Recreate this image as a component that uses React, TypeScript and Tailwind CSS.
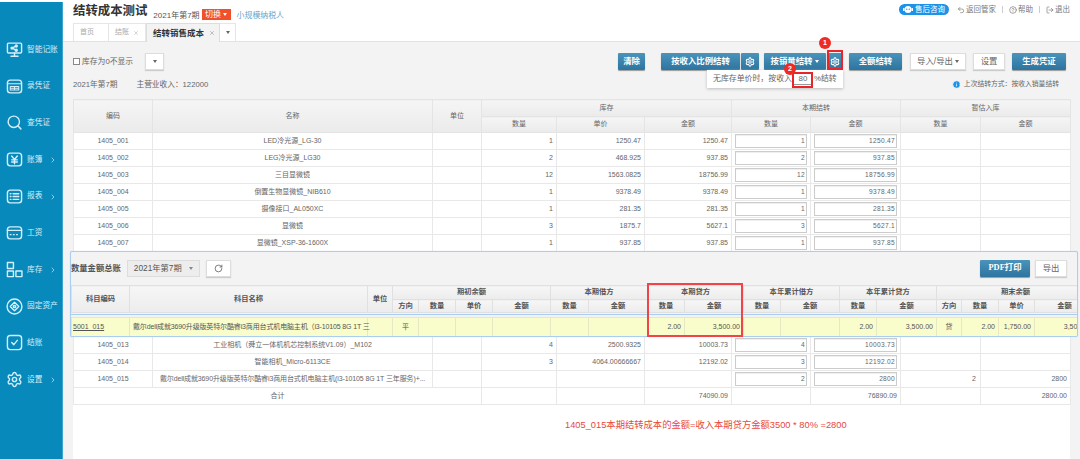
import { ChevronRight, RotateCw, Undo2, CircleHelp, LogOut, Search, Settings, Info, X } from "lucide-react";
import type { ReactNode } from "react";

const font = "font-['Liberation_Sans','Noto_Sans_CJK_SC',sans-serif]";

const iconProps = {
  width: 17,
  height: 17,
  viewBox: "0 0 24 24",
  fill: "none",
  stroke: "currentColor",
  strokeWidth: 2,
  strokeLinecap: "round" as const,
  strokeLinejoin: "round" as const,
};

const MonitorIcon = () => (
  <svg {...iconProps}>
    <rect x="2" y="3" width="20" height="14" rx="1.5" />
    <path d="M12 17v4M7 21.5h10M9 10l5-3M9 10l5 3" />
    <circle cx="8.5" cy="10" r="1.4" fill="currentColor" />
    <circle cx="14.5" cy="7" r="1.4" fill="currentColor" />
    <circle cx="14.5" cy="13" r="1.4" fill="currentColor" />
  </svg>
);
const VoucherIcon = () => (
  <svg {...iconProps}>
    <rect x="2" y="3" width="20" height="18" rx="4" />
    <path d="M2 8h20M6 12h12v5H6zM12 12v5M6 14.5h12" strokeWidth={1.5} />
  </svg>
);
const YenIcon = () => (
  <svg {...iconProps}>
    <rect x="2" y="3" width="20" height="18" rx="4" />
    <path d="M8 7l4 5 4-5M12 12v6M8 12.5h8M8 15.5h8" />
  </svg>
);
const ReportIcon = () => (
  <svg {...iconProps}>
    <rect x="2" y="3" width="20" height="18" rx="4" />
    <path d="M6 8h1M10 8h8M6 12h1M10 12h8M6 16h1M10 16h8" />
  </svg>
);
const SalaryIcon = () => (
  <svg {...iconProps}>
    <rect x="2" y="4" width="20" height="17" rx="4" />
    <path d="M2 9h20M6 15h1M10.5 15h1M15 15h1" />
  </svg>
);
const StockIcon = () => (
  <svg {...iconProps}>
    <rect x="2" y="2" width="8.5" height="8.5" />
    <rect x="2" y="14" width="8.5" height="8" />
    <rect x="14" y="14" width="8.5" height="8" />
  </svg>
);
const AssetIcon = () => (
  <svg {...iconProps}>
    <circle cx="12" cy="12" r="10.5" />
    <path d="M12 6l6 6-6 6-6-6z" />
    <circle cx="12" cy="12" r="1.6" />
  </svg>
);
const CloseIcon = () => (
  <svg {...iconProps}>
    <rect x="2" y="2" width="20" height="20" rx="4" />
    <path d="M8 12l3 3 5-6" />
  </svg>
);

const navItems: { label: string; icon: ReactNode; more?: boolean }[] = [
  { label: "智能记账", icon: <MonitorIcon /> },
  { label: "录凭证", icon: <VoucherIcon /> },
  { label: "查凭证", icon: <Search size={17} strokeWidth={2} /> },
  { label: "账簿", icon: <YenIcon />, more: true },
  { label: "报表", icon: <ReportIcon />, more: true },
  { label: "工资", icon: <SalaryIcon /> },
  { label: "库存", icon: <StockIcon />, more: true },
  { label: "固定资产", icon: <AssetIcon /> },
  { label: "结账", icon: <CloseIcon /> },
  { label: "设置", icon: <Settings size={17} strokeWidth={2} />, more: true },
];

function Caret({ className = "" }: { className?: string }) {
  return <span className={`inline-block h-0 w-0 border-x-[2.5px] border-t-[3px] border-x-transparent border-t-current ${className}`} />;
}

function Sidebar() {
  return (
    <aside className="mt-[2px] flex w-[63px] shrink-0 flex-col border-r border-[#3aa5cf] bg-[#0889bc] pt-[29px] text-[#d5eef7]">
      {navItems.map((item) => (
        <div key={item.label} className="relative flex h-[36.7px] items-center pl-[6px]">
          <span className="flex w-[21px] shrink-0">{item.icon}</span>
          <span className="whitespace-nowrap text-[7.7px]">{item.label}</span>
          {item.more && <ChevronRight size={8} className="absolute right-[5px] top-[15px]" />}
        </div>
      ))}
    </aside>
  );
}

function TopLinks() {
  return (
    <div className="flex items-center self-start pt-[4px] text-[7.5px] leading-[11px] text-[#777]">
      <span className="flex h-[11px] w-[50px] items-center gap-[2px] rounded-full bg-[#1d93e8] pl-[4px] text-white">
        <svg width="10" height="9" viewBox="0 0 20 18" fill="white">
          <rect x="0" y="6" width="3" height="6" rx="1" />
          <rect x="17" y="6" width="3" height="6" rx="1" />
          <circle cx="10" cy="9" r="7" />
          <circle cx="7.5" cy="8.5" r="1.3" fill="#1d93e8" />
          <circle cx="12.5" cy="8.5" r="1.3" fill="#1d93e8" />
        </svg>
        售后咨询
      </span>
      <span className="ml-[8px] flex items-center gap-[1px]"><Undo2 size={8} />返回管家</span>
      <span className="mx-[6px] h-[7px] w-px bg-[#ccc]" />
      <span className="flex items-center gap-[1px]"><CircleHelp size={8} />帮助</span>
      <span className="mx-[6px] h-[7px] w-px bg-[#ccc]" />
      <span className="flex items-center gap-[1px]"><LogOut size={8} />退出</span>
    </div>
  );
}

function Header() {
  return (
    <header className="h-[42px] shrink-0 border-b border-[#e2e2e2] bg-white">
      <div className="flex h-[23px] justify-between pl-[10px] pr-[10px]">
        <div className="flex items-start pt-[4px]">
          <h1 className="text-[12.4px] font-bold leading-[15px] text-[#333]">结转成本测试</h1>
          <span className="ml-[6px] pt-[7px] text-[8px] leading-[10px] text-[#555]">2021年第7期</span>
          <span className="ml-[2px] mt-[5px] flex h-[11px] w-[29px] items-center justify-center gap-[2px] bg-[#f0512c] text-[8px] text-white">
            切换<Caret />
          </span>
          <span className="ml-[6px] pt-[7px] text-[7.9px] leading-[10px] text-[#6aa3c8]">小规模纳税人</span>
        </div>
        <TopLinks />
      </div>
      <div className="flex h-[18px] items-end pl-[10px] text-[7px] text-[#aaa]">
        <span className="flex h-[18px] w-[36px] items-center border border-b-0 border-[#e6e6e6] pl-[6px]">首页</span>
        <span className="flex h-[18px] w-[37px] items-center justify-between border border-b-0 border-l-0 border-[#e6e6e6] px-[6px]">
          结账<X size={6} />
        </span>
        <span className="relative top-px flex h-[19px] w-[74px] items-center justify-between border border-b-0 border-[#ddd] bg-[#f3f3f3] pl-[6px] pr-[4px] text-[8.5px] font-bold text-[#333]">
          结转销售成本<X size={6} className="text-[#888]" />
        </span>
        <span className="flex h-[18px] w-[16px] items-center justify-center border border-b-0 border-l-0 border-[#e6e6e6] text-[#666]">
          <Caret />
        </span>
      </div>
    </header>
  );
}

function BlueButton({ children, className = "" }: { children: ReactNode; className?: string }) {
  return (
    <span className={`flex h-[17px] items-center justify-center rounded-[1px] bg-gradient-to-b from-[#4a94bb] to-[#2d749f] text-[8.4px] font-bold text-white shadow-[0_1px_1px_#999] ${className}`}>
      {children}
    </span>
  );
}

function WhiteButton({ children, className = "" }: { children: ReactNode; className?: string }) {
  return (
    <span className={`flex h-[17px] items-center justify-center gap-[2px] border border-[#ddd] bg-white text-[8.4px] text-[#666] shadow-[0_1px_1px_#ccc] ${className}`}>
      {children}
    </span>
  );
}

function Toolbar() {
  return (
    <div className="flex h-[17px] items-center pr-[4px]">
      <span className="h-[7px] w-[7px] border border-[#888] bg-white" />
      <span className="ml-[2px] text-[7.8px] text-[#666]">库存为0不显示</span>
      <WhiteButton className="ml-[12px] w-[19px]"><Caret /></WhiteButton>
      <div className="ml-auto flex items-center">
        <BlueButton className="w-[27px]">清除</BlueButton>
        <BlueButton className="ml-[16px] w-[79px]">按收入比例结转</BlueButton>
        <BlueButton className="ml-px w-[18px]"><Settings size={10} strokeWidth={2.5} /></BlueButton>
        <BlueButton className="ml-[5px] w-[62px] gap-[3px]">按销量结转<Caret /></BlueButton>
        <BlueButton className="ml-px w-[16px]"><Settings size={10} strokeWidth={2.5} /></BlueButton>
        <BlueButton className="ml-[6px] w-[53px]">全额结转</BlueButton>
        <WhiteButton className="ml-[8px] w-[56px]">导入/导出<Caret /></WhiteButton>
        <WhiteButton className="ml-[7px] w-[32px]">设置</WhiteButton>
        <BlueButton className="ml-[7px] w-[54px]">生成凭证</BlueButton>
      </div>
    </div>
  );
}

type StockRow = {
  code: string;
  name: string;
  nameClass?: string;
  qty?: string;
  price?: string;
  amount?: string;
  outQty: string;
  outAmount: string;
  estQty?: string;
  estAmount?: string;
};

const stockRows: StockRow[] = [
  { code: "1405_001", name: "LED冷光源_LG-30", qty: "1", price: "1250.47", amount: "1250.47", outQty: "1", outAmount: "1250.47" },
  { code: "1405_002", name: "LEG冷光源_LG30", qty: "2", price: "468.925", amount: "937.85", outQty: "2", outAmount: "937.85" },
  { code: "1405_003", name: "三目显微镜", qty: "12", price: "1563.0825", amount: "18756.99", outQty: "12", outAmount: "18756.99" },
  { code: "1405_004", name: "倒置生物显微镜_NIB610", qty: "1", price: "9378.49", amount: "9378.49", outQty: "1", outAmount: "9378.49" },
  { code: "1405_005", name: "摄像接口_AL050XC", qty: "1", price: "281.35", amount: "281.35", outQty: "1", outAmount: "281.35" },
  { code: "1405_006", name: "显微镜", qty: "3", price: "1875.7", amount: "5627.1", outQty: "3", outAmount: "5627.1" },
  { code: "1405_007", name: "显微镜_XSP-36-1600X", qty: "1", price: "937.85", amount: "937.85", outQty: "1", outAmount: "937.85" },
];

const lowerRows: StockRow[] = [
  { code: "1405_013", name: "工业相机（舜立一体机机芯控制系统V1.09）_M102", qty: "4", price: "2500.9325", amount: "10003.73", outQty: "4", outAmount: "10003.73" },
  { code: "1405_014", name: "智能相机_Micro-6113CE", qty: "3", price: "4064.00666667", amount: "12192.02", outQty: "3", outAmount: "12192.02" },
  { code: "1405_015", name: "戴尔dell成就3690升级版英特尔酷睿i3商用台式机电脑主机(i3-10105 8G 1T 三年服务)+...", nameClass: "tracking-[-0.12px]", outQty: "2", outAmount: "2800", estQty: "2", estAmount: "2800" },
];

const th = "border border-[#e4e4e4] bg-gradient-to-b from-[#f5f5f5] to-[#ebebeb] p-0 text-center font-normal";
const td = "border border-[#e8e8e8] px-[3px] py-0";

function InputBox({ value }: { value: string }) {
  return (
    <div className="mx-auto h-[14px] border border-[#ccc] bg-white pr-px text-right text-[6.6px] leading-[12px] tracking-[0.3px] shadow-[inset_0_1px_1px_#eee]">
      {value}
    </div>
  );
}

function StockTableRow({ row }: { row: StockRow }) {
  return (
    <tr className="h-[17px] bg-white">
      <td className={`${td} text-center`}>{row.code}</td>
      <td className={`${td} overflow-hidden whitespace-nowrap text-center ${row.nameClass ?? ""}`}>{row.name}</td>
      <td className={td} />
      <td className={`${td} text-right`}>{row.qty}</td>
      <td className={`${td} text-right`}>{row.price}</td>
      <td className={`${td} text-right`}>{row.amount}</td>
      <td className={td}><InputBox value={row.outQty} /></td>
      <td className={td}><InputBox value={row.outAmount} /></td>
      <td className={`${td} text-right`}>
        <span className="pr-px">{row.estQty}</span>
      </td>
      <td className={`${td} text-right`}>{row.estAmount}</td>
    </tr>
  );
}

function StockTable() {
  return (
    <table className="w-[997px] table-fixed border-collapse text-[7px] text-[#666]">
      <colgroup>
        <col className="w-[79px]" />
        <col className="w-[280px]" />
        <col className="w-[49px]" />
        <col className="w-[75px]" />
        <col className="w-[88px]" />
        <col className="w-[87px]" />
        <col className="w-[79px]" />
        <col className="w-[90px]" />
        <col className="w-[80px]" />
        <col className="w-[90px]" />
      </colgroup>
      <thead>
        <tr className="h-[17px]">
          <th rowSpan={2} className={th}>编码</th>
          <th rowSpan={2} className={th}>名称</th>
          <th rowSpan={2} className={th}>单位</th>
          <th colSpan={3} className={th}>库存</th>
          <th colSpan={2} className={th}>本期结转</th>
          <th colSpan={2} className={th}>暂估入库</th>
        </tr>
        <tr className="h-[16px]">
          {["数量", "单价", "金额", "数量", "金额", "数量", "金额"].map((label, i) => (
            <th key={i} className={th}>{label}</th>
          ))}
        </tr>
      </thead>
      <tbody>
        {stockRows.map((row) => <StockTableRow key={row.code} row={row} />)}
        {[0, 1, 2, 3, 4].map((i) => (
          <tr key={i} className="h-[17px] bg-white"><td colSpan={10} /></tr>
        ))}
        {lowerRows.map((row) => <StockTableRow key={row.code} row={row} />)}
        <tr className="h-[17px] bg-white">
          <td colSpan={3} className={`${td} text-center`}>合计</td>
          <td className={td} />
          <td className={td} />
          <td className={`${td} text-right`}>74090.09</td>
          <td className={td} />
          <td className={`${td} text-right`}>76890.09</td>
          <td className={td} />
          <td className={`${td} text-right`}>2800.00</td>
        </tr>
      </tbody>
    </table>
  );
}

function LedgerCols() {
  return (
    <colgroup>
      <col className="w-[58px]" />
      <col className="w-[238px]" />
      <col className="w-[25px]" />
      <col className="w-[26px]" />
      <col className="w-[37px]" />
      <col className="w-[37px]" />
      <col className="w-[58px]" />
      <col className="w-[38px]" />
      <col className="w-[59px]" />
      <col className="w-[37px]" />
      <col className="w-[59px]" />
      <col className="w-[37px]" />
      <col className="w-[59px]" />
      <col className="w-[37px]" />
      <col className="w-[60px]" />
      <col className="w-[25px]" />
      <col className="w-[37px]" />
      <col className="w-[36px]" />
      <col className="w-[60px]" />
    </colgroup>
  );
}

const lth = "border border-[#e0e0e0] bg-gradient-to-b from-[#f6f6f6] to-[#ececec] p-0 text-center font-bold";
const ltd = "border border-[#e6e8c4] px-[3px] py-0";

function LedgerPanel() {
  const sub = ["方向", "数量", "单价", "金额", "数量", "金额", "数量", "金额", "数量", "金额", "数量", "金额", "方向", "数量", "单价", "金额"];
  const num = `${ltd} text-right`;
  return (
    <section className="absolute left-[70px] top-[251px] h-[86px] w-[1008px] overflow-hidden rounded-[2px] border border-[#a9cef2] bg-[#f3f3f3] text-[7.3px] text-[#555] shadow-[0_0_1px_#a9cef2]">
      <div className="flex h-[33px] items-center pr-[10px]">
        <span className="text-[8.3px] font-bold">数量金额总账</span>
        <span className="ml-[6px] flex h-[17px] w-[73px] items-center justify-center gap-[7px] border border-[#ddd] bg-[#ededed] text-[8.3px]">
          2021年第7期<Caret className="text-[#888]" />
        </span>
        <span className="ml-[6px] flex h-[17px] w-[25px] items-center justify-center border border-[#ddd] bg-white shadow-[0_1px_1px_#ccc]">
          <RotateCw size={9} />
        </span>
        <BlueButton className="ml-auto w-[50px] font-['Liberation_Serif','Noto_Sans_CJK_SC',serif]">PDF打印</BlueButton>
        <WhiteButton className="ml-[5px] w-[32px]">导出</WhiteButton>
      </div>
      <table className="w-[1023px] table-fixed border-collapse">
        <LedgerCols />
        <thead>
          <tr className="h-[14px]">
            <th rowSpan={2} className={lth}>科目编码</th>
            <th rowSpan={2} className={lth}>科目名称</th>
            <th rowSpan={2} className={lth}>单位</th>
            <th colSpan={4} className={lth}>期初余额</th>
            <th colSpan={2} className={lth}>本期借方</th>
            <th colSpan={2} className={lth}>本期贷方</th>
            <th colSpan={2} className={lth}>本年累计借方</th>
            <th colSpan={2} className={lth}>本年累计贷方</th>
            <th colSpan={4} className={lth}>期末余额</th>
          </tr>
          <tr className="h-[13px]">
            {sub.map((label, i) => <th key={i} className={`${lth} leading-[12px]`}>{label}</th>)}
          </tr>
        </thead>
      </table>
      <div className="mt-px border-t border-[#a9cef2] pt-[2px]">
        <table className="w-[1023px] table-fixed border-collapse bg-[#f9fccb] text-[7px]">
          <LedgerCols />
          <tbody>
            <tr className="h-[20px]">
              <td className={`${ltd} pl-px text-left underline`}>5001_015</td>
              <td className={`${ltd} whitespace-nowrap text-left tracking-[-0.14px]`}>戴尔dell成就3690升级版英特尔酷睿i3商用台式机电脑主机（i3-10105 8G 1T 三</td>
              <td className={ltd} />
              <td className={`${ltd} text-center`}>平</td>
              <td className={ltd} />
              <td className={ltd} />
              <td className={ltd} />
              <td className={ltd} />
              <td className={ltd} />
              <td className={num}>2.00</td>
              <td className={num}>3,500.00</td>
              <td className={ltd} />
              <td className={ltd} />
              <td className={num}>2.00</td>
              <td className={num}>3,500.00</td>
              <td className={`${ltd} text-center`}>贷</td>
              <td className={num}>2.00</td>
              <td className={num}>1,750.00</td>
              <td className={num}>3,500.00</td>
            </tr>
          </tbody>
        </table>
      </div>
    </section>
  );
}

function Badge({ n, className }: { n: number; className: string }) {
  return (
    <span className={`absolute flex h-[12px] w-[12px] items-center justify-center rounded-full bg-[#f02b23] text-[7px] font-bold text-white ${className}`}>
      {n}
    </span>
  );
}

export default function App() {
  return (
    <div className={`relative flex h-[459px] w-[1080px] overflow-hidden bg-white ${font}`}>
      <Sidebar />
      <div className="flex min-w-0 flex-1 flex-col">
        <Header />
        <main className="flex flex-1 flex-col bg-[#f3f3f3] pl-[10px] pr-[10px] pt-[11px]">
          <Toolbar />
          <div className="flex h-[29px] items-center justify-between pr-[7px] text-[7.7px] text-[#666]">
            <div className="flex gap-[19px]">
              <span>2021年第7期</span>
              <span>主营业收入：122000</span>
            </div>
            <div className="flex items-center gap-[3px] pr-[4px] text-[6.8px]">
              <Info size={9} className="fill-[#1d93e8] text-white" />
              上次结转方式：按收入销量结转
            </div>
          </div>
          <div className="w-[997px] flex-1 bg-white">
            <StockTable />
            <p className="mt-[14px] pl-[492px] text-[9.3px] text-[#e8473f]">1405_015本期结转成本的金额=收入本期贷方金额3500 * 80% =2800</p>
          </div>
        </main>
      </div>

      <LedgerPanel />

      {/* popup under the sales-volume button */}
      <div className="absolute left-[707px] top-[70px] flex h-[18px] w-[136px] items-center bg-white pl-[6px] text-[7.9px] text-[#666] shadow-[0_1px_3px_#bbb]">
        无库存单价时，按收入
        <span className="mx-[1px] w-[20px] border-b border-[#999] text-center leading-[11px]">80</span>
        %结转
      </div>

      {/* red annotation marks */}
      <span className="absolute left-[827px] top-[50px] h-[20px] w-[16px] border-2 border-[#e8252a]" />
      <span className="absolute left-[792px] top-[72px] h-[16px] w-[21px] border-2 border-[#e8252a]" />
      <span className="absolute left-[647px] top-[283px] h-[54px] w-[96px] border-2 border-[#f0444a]" />
      <Badge n={1} className="left-[819px] top-[37px]" />
      <Badge n={2} className="left-[784px] top-[63px]" />
    </div>
  );
}
